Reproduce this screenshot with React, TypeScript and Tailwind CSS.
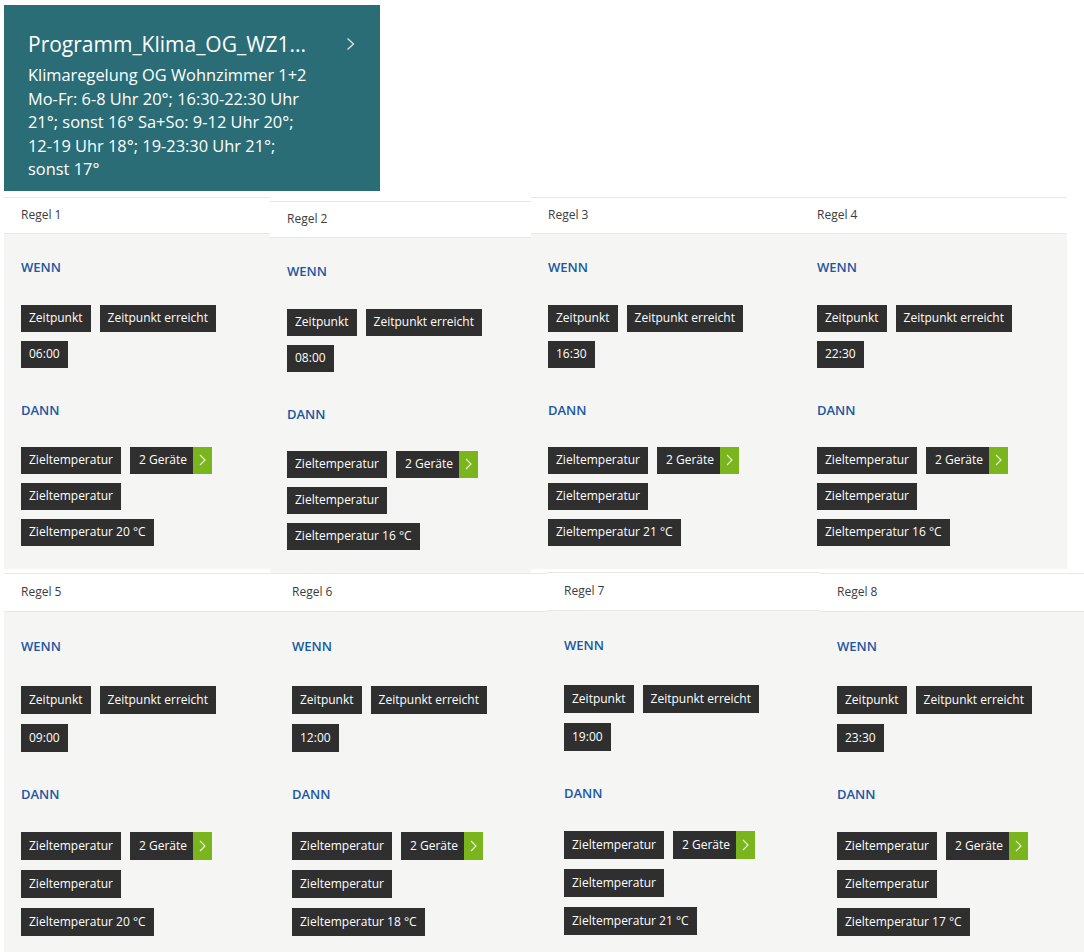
import React from 'react';

type Rule = {
  title: string;
  time: string;
  temp: string;
  width: number;
  shift: number;
};

const ROW_ONE: Rule[] = [
  { title: 'Regel 1', time: '06:00', temp: '20', width: 266, shift: 0 },
  { title: 'Regel 2', time: '08:00', temp: '16', width: 261, shift: 4 },
  { title: 'Regel 3', time: '16:30', temp: '21', width: 269, shift: 0 },
  { title: 'Regel 4', time: '22:30', temp: '16', width: 267, shift: 0 },
];

const ROW_TWO: Rule[] = [
  { title: 'Regel 5', time: '09:00', temp: '20', width: 271, shift: 0 },
  { title: 'Regel 6', time: '12:00', temp: '18', width: 272, shift: 0 },
  { title: 'Regel 7', time: '19:00', temp: '21', width: 273, shift: -1 },
  { title: 'Regel 8', time: '23:30', temp: '17', width: 264, shift: 0 },
];

function Chip({ children, tall }: { children: React.ReactNode; tall?: boolean }) {
  return (
    <span
      className={`inline-flex items-center bg-[#2f2f2f] text-white text-[12px] px-[8px] ${
        tall ? 'h-[28px]' : 'h-[27px]'
      }`}
    >
      {children}
    </span>
  );
}

function DeviceChip({ tall }: { tall?: boolean }) {
  return (
    <span className={`inline-flex items-stretch bg-[#2f2f2f] text-white text-[12px] ${tall ? 'h-[28px]' : 'h-[27px]'}`}>
      <span className="flex items-center pl-[9px] pr-[6px]">2 Geräte</span>
      <span className="flex items-center justify-center w-[19px] bg-[#7ab51d]">
        <svg width="7" height="12" viewBox="0 0 7 12" fill="none">
          <path d="M1 1l5 5-5 5" stroke="#e9f5d6" strokeWidth="1.2" />
        </svg>
      </span>
    </span>
  );
}

function Label({ children }: { children: React.ReactNode }) {
  return <div className="text-[13px] leading-[18px] font-semibold text-[#1b57a2]">{children}</div>;
}

function Panel({ rule, second }: { rule: Rule; second?: boolean }) {
  return (
    <div className="flex flex-col" style={{ width: rule.width, marginTop: rule.shift }}>
      <div
        className={`bg-white border-t border-b border-[#e8e8e6] flex items-center pl-[17px] text-[12px] text-[#3c3c3c] ${
          second ? 'h-[39px]' : 'h-[37px]'
        }`}
      >
        {rule.title}
      </div>
      <div
        className={`bg-[#f5f5f3] pl-[17px] ${second ? 'pt-[25px] h-[345px]' : 'pt-[24px] pb-[23px]'}`}
      >
        <Label>WENN</Label>
        <div className={`flex flex-col items-start ${second ? 'mt-[31px] gap-[10px]' : 'mt-[29px] gap-[9px]'}`}>
          <div className="flex gap-[9px]">
            <Chip tall={second}>Zeitpunkt</Chip>
            <Chip tall={second}>Zeitpunkt erreicht</Chip>
          </div>
          <Chip tall={second}>{rule.time}</Chip>
        </div>
        <div className="mt-[33px]">
          <Label>DANN</Label>
        </div>
        <div className={`flex flex-col items-start ${second ? 'mt-[29px] gap-[10px]' : 'mt-[28px] gap-[9px]'}`}>
          <div className="flex gap-[9px]">
            <Chip tall={second}>Zieltemperatur</Chip>
            <DeviceChip tall={second} />
          </div>
          <Chip tall={second}>Zieltemperatur</Chip>
          <Chip tall={second}>Zieltemperatur {rule.temp} °C</Chip>
        </div>
      </div>
    </div>
  );
}

export default function App() {
  return (
    <div className="w-[1084px] h-[952px] overflow-hidden bg-white pt-[5px] pl-[4px] font-['Open_Sans',sans-serif]">
      <div className="w-[376px] bg-[#2a6d77] text-white pl-[24px] pr-[22px] pt-[24px] pb-[10px]">
        <div className="flex items-center justify-between">
          <span className="text-[21px] leading-[30px]">Programm_Klima_OG_WZ1...</span>
          <svg width="9" height="14" viewBox="0 0 9 14" fill="none" className="mr-[3px]">
            <path d="M1.5 1.5l6 5.5-6 5.5" stroke="#d5e8ec" strokeWidth="1.3" />
          </svg>
        </div>
        <div className="mt-[4px] text-[16.4px] leading-[23.5px]">
          Klimaregelung OG Wohnzimmer 1+2
          <br />
          Mo-Fr: 6-8 Uhr 20°; 16:30-22:30 Uhr
          <br />
          21°; sonst 16° Sa+So: 9-12 Uhr 20°;
          <br />
          12-19 Uhr 18°; 19-23:30 Uhr 21°;
          <br />
          sonst 17°
        </div>
      </div>
      <div className="mt-[6px] flex items-start h-[376px]">
        {ROW_ONE.map((r) => (
          <Panel key={r.title} rule={r} />
        ))}
      </div>
      <div className="flex items-start">
        {ROW_TWO.map((r) => (
          <Panel key={r.title} rule={r} second />
        ))}
      </div>
    </div>
  );
}
